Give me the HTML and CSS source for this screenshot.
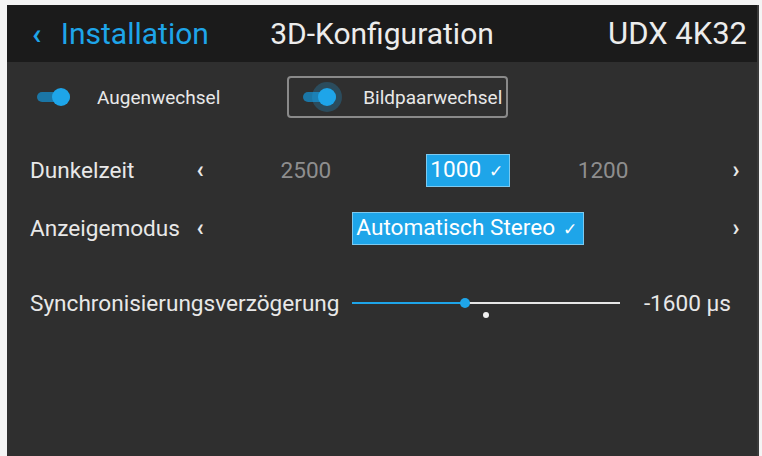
FILE: index.html
```html
<!DOCTYPE html>
<html lang="de">

<head>
    <meta charset="utf-8">
    <meta name="viewport" content="width=device-width, initial-scale=1.0">
    <title>3D-Konfiguration</title>
    <link rel="stylesheet" href="styles.css">
</head>

<body>
    <div class="screen">
        <header class="topbar">
            <a class="back" href="#"><span class="back-arrow">&lsaquo;</span> Installation</a>
            <h1 class="title">3D-Konfiguration</h1>
            <div class="device">UDX 4K32</div>
        </header>

        <div class="toggles">
            <label class="toggle-item">
                <span class="switch"><span class="knob"></span></span>
                <span>Augenwechsel</span>
            </label>
            <label class="toggle-item focused">
                <span class="switch"><span class="knob glow"></span></span>
                <span>Bildpaarwechsel</span>
            </label>
        </div>

        <div class="setting">
            <div class="setting-label">Dunkelzeit</div>
            <div class="arrow">&lsaquo;</div>
            <div class="options">
                <span class="opt left">2500</span>
                <span class="opt selected">1000 <span class="check">&#10003;</span></span>
                <span class="opt right">1200</span>
            </div>
            <div class="arrow">&rsaquo;</div>
        </div>

        <div class="setting">
            <div class="setting-label">Anzeigemodus</div>
            <div class="arrow">&lsaquo;</div>
            <div class="options">
                <span></span>
                <span class="opt selected">Automatisch Stereo <span class="check">&#10003;</span></span>
                <span></span>
            </div>
            <div class="arrow">&rsaquo;</div>
        </div>

        <div class="slider-row">
            <div class="slider-label">Synchronisierungsverzögerung</div>
            <div class="slider">
                <div class="track-fill"></div>
                <div class="thumb"></div>
                <div class="marker"></div>
            </div>
            <div class="slider-value">-1600 µs</div>
        </div>
    </div>
</body>

</html>
```

FILE: styles.css
```css
:root {
    --head-bg: #1b1b1b;
    --panel-bg: #2f2f2f;
    --blue: #1ea5e9;
    --blue-dark: #1b76a6;
    --text: #e8e8e8;
    --muted: #8e8e8e;
}

* {
    box-sizing: border-box;
    margin: 0;
    padding: 0;
}

body {
    background: #f4f4f4;
    font-family: Roboto, "Liberation Sans", sans-serif;
    color: var(--text);
    overflow: hidden;
}

.screen {
    margin: 5px 3px 0 7px;
    height: 460px;
    background: var(--panel-bg);
    border-right: 2px solid #3a3a3a;
}

/* kopfzeile */
.topbar {
    height: 57px;
    background: var(--head-bg);
    display: grid;
    grid-template-columns: 1fr auto 1fr;
    align-items: center;
    padding: 0 10px 0 10px;
    font-size: 30px;
}

.back {
    margin-left: 15px;
    color: var(--blue);
    text-decoration: none;
}

.back-arrow {
    font-weight: bold;
    margin-right: 12px;
}

.title {
    font-size: 30px;
    font-weight: normal;
    color: #ececec;
}

.device {
    justify-self: end;
    color: #ececec;
    font-size: 31px;
}

/* schalter */
.toggles {
    display: flex;
    align-items: center;
    height: 70px;
    padding-left: 30px;
    font-size: 19px;
}

.toggle-item {
    display: flex;
    align-items: center;
    gap: 27px;
}

.toggle-item.focused {
    margin-left: 67px;
    border: 2px solid #8a8a8a;
    border-radius: 4px;
    height: 42px;
    padding: 0 4px 0 14px;
}

.switch {
    position: relative;
    width: 33px;
    height: 10px;
    border-radius: 5px;
    background: var(--blue-dark);
}

.knob {
    position: absolute;
    right: 0;
    top: -4px;
    width: 18px;
    height: 18px;
    border-radius: 50%;
    background: var(--blue);
}

.knob.glow {
    box-shadow: 0 0 0 6px rgba(30, 165, 233, 0.25);
}

/* auswahlzeilen */
.setting {
    display: grid;
    grid-template-columns: 160px 20px 1fr 20px;
    align-items: center;
    height: 58px;
    padding: 0 11px 0 23px;
    font-size: 22.6px;
}

.toggles + .setting {
    margin-top: 9px;
}

.arrow {
    font-weight: bold;
    font-size: 23px;
    text-align: center;
}

.options {
    display: grid;
    grid-template-columns: 1fr auto 1fr;
    align-items: center;
}

.opt {
    color: var(--muted);
}

.opt.left {
    justify-self: end;
    margin-right: 95px;
}

.opt.right {
    justify-self: start;
    margin-left: 68px;
}

.opt.selected {
    background: var(--blue);
    color: #fff;
    border: 1px solid #7cc9ef;
    padding: 1px 6px 1px 3px;
    line-height: 27px;
}

.check {
    font-size: 17px;
    margin-left: 2px;
}

/* regler */
.slider-row {
    display: flex;
    align-items: center;
    height: 60px;
    margin-top: 16px;
    padding: 0 26px 0 23px;
    font-size: 22.6px;
}

.slider {
    position: relative;
    width: 268px;
    height: 2px;
    margin-left: 12px;
    background: #e6e6e6;
}

.track-fill {
    width: 113px;
    height: 2px;
    background: var(--blue);
}

.thumb {
    position: absolute;
    left: 108px;
    top: -4px;
    width: 10px;
    height: 10px;
    border-radius: 50%;
    background: var(--blue);
}

.marker {
    position: absolute;
    left: 131px;
    top: 10px;
    width: 6px;
    height: 6px;
    border-radius: 50%;
    background: #f2f2f2;
}

.slider-value {
    margin-left: auto;
}
```
